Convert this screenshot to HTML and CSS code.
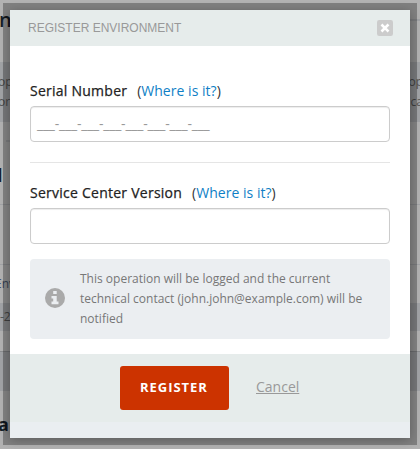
FILE: index.html
```html
<!DOCTYPE html>
<html lang="en">
<head>
<meta charset="utf-8">
<title>Register Environment</title>
<link rel="stylesheet" href="styles.css">
</head>
<body>
<div class="page">
  <div class="row title"><b>n</b><i></i></div>
  <div class="row band notice"><p><span>op</span><span>op</span></p><p><span>or</span><span>ca</span></p></div>
  <div class="row mark"><i></i></div>
  <div class="row heading"><b>l</b></div>
  <div class="row gap"></div>
  <div class="row env"><span>Env</span></div>
  <div class="row band version"><span>-2</span></div>
  <div class="row space"></div>
  <div class="row band strip"></div>
  <div class="row last"><b>a</b></div>
</div>
<div class="frame">
  <section class="modal">
    <header class="modal-header">
      <h1>REGISTER ENVIRONMENT</h1>
      <svg class="close" viewBox="0 0 16 16"><rect width="16" height="16" rx="2.2" fill="#ccc"/><path d="M5.4 5.4l5.2 5.2M10.6 5.4l-5.2 5.2" stroke="#fff" stroke-width="2.6" stroke-linecap="square"/></svg>
    </header>
    <div class="modal-body">
      <div class="field">
        <div class="label">Serial Number <span class="help">(<a>Where is it?</a>)</span></div>
        <div class="input">___-___-___-___-___-___-___-___</div>
      </div>
      <div class="field second">
        <div class="label">Service Center Version <span class="help">(<a>Where is it?</a>)</span></div>
        <div class="input"></div>
      </div>
      <div class="info">
        <svg class="info-icon" viewBox="0 0 20 20"><circle cx="10" cy="10" r="10" fill="#aaa"/><path d="M8.2 3h3.5v2.9H8.2zM6.5 7.9h5.2v5.7h1.8v2.6h-7v-2.6h1.7v-3.1H6.5z" fill="#ebeef1"/></svg>
        <p>This operation will be logged and the current<br>technical contact (john.john@example.com) will be<br>notified</p>
      </div>
    </div>
    <footer class="modal-footer">
      <div class="button">REGISTER</div>
      <a class="cancel">Cancel</a>
    </footer>
  </section>
</div>
</body>
</html>
```
FILE: styles.css
```css
* { box-sizing: border-box; }
body { margin: 0; width: 420px; height: 449px; overflow: hidden; position: relative; font-family: "Open Sans", sans-serif; background: #b2b2b2; }
p, h1 { margin: 0; }

.page { height: 449px; overflow: hidden; font-size: 12px; color: #555; white-space: nowrap; }
.row { overflow: hidden; }
.row b { color: #151d26; font-size: 18px; line-height: 24px; }
.band { background: #a1a3a6; }
.title { height: 62px; display: flex; justify-content: space-between; padding-top: 8px; }
.title b { font-size: 20px; font-weight: 600; margin-left: -1px; }
.title i { width: 11px; height: 2px; margin-top: 11px; background: #a1a3a6; }
.notice { height: 60px; padding-top: 10px; }
.notice p { display: flex; justify-content: space-between; height: 20px; line-height: 20px; margin: 0 -3px 0 -2px; }
.mark { height: 41px; padding: 18px 0 0 6px; }
.mark i { display: block; width: 5px; height: 2px; background: #a1a3a6; }
.heading { height: 42px; border-bottom: 1px solid #a1a3a6; }
.heading b { display: block; margin-left: -3px; }
.gap { height: 60px; border-bottom: 1px solid #a1a3a6; }
.env { height: 38px; line-height: 38px; color: #46536c; }
.env span { margin-left: -5px; }
.version { height: 28px; line-height: 28px; }
.space { height: 20px; }
.strip { height: 40px; border-top: 1px solid #8c8e90; }
.last { height: 58px; padding-top: 21px; }
.last b { display: block; margin-left: -2px; }

.frame { position: absolute; inset: 3px; width: 414px; height: 442px; padding: 7px; background: rgba(0, 0, 0, .28); }
.modal { width: 400px; height: 428px; background: #eaeef1; box-shadow: 0 2px 10px rgba(0, 0, 0, .28); }
.modal-header { height: 36px; padding: 0 17px 0 18px; display: flex; align-items: center; justify-content: space-between; background: #e6eceb; }
.modal-header h1 { font: 400 12px/36px "Liberation Sans", sans-serif; color: #999; }
.close { width: 16px; height: 16px; }
.modal-body { height: 308px; padding: 34px 20px 0; background: #fff; }
.label { height: 22px; line-height: 22px; font-size: 14px; letter-spacing: .25px; color: #222; -webkit-text-stroke: .25px #222; white-space: nowrap; }
.help { margin-left: 6px; letter-spacing: .03px; color: #333; -webkit-text-stroke: 0; }
.help a { color: #0f7fc6; }
.input { height: 36px; margin-top: 4px; padding: 0 6px; border: 1px solid #ccc; border-radius: 4px; box-shadow: inset 0 1px 1px rgba(0, 0, 0, .075); font-size: 14px; line-height: 34px; letter-spacing: -.2px; color: #999; }
.second { margin-top: 20px; padding-top: 19px; border-top: 1px solid #e5e5e5; }
.info { height: 80px; margin-top: 15px; padding: 10px 0 0 15px; display: flex; background: #ebeef1; border-radius: 4px; }
.info-icon { flex: none; width: 20px; height: 20px; margin: 19px 15px 0 0; }
.info p { font-size: 12px; line-height: 20px; color: #777; white-space: nowrap; }
.modal-footer { height: 68px; padding: 12px 0 0 110px; display: flex; align-items: flex-start; background: #e6eceb; }
.button { width: 109px; height: 44px; padding-left: 20px; border-radius: 3px; background: #cc3300; color: #fff; font-size: 13px; font-weight: 700; line-height: 43px; letter-spacing: .95px; }
.cancel { margin-left: 27px; font-size: 14px; line-height: 42px; color: #999; text-decoration: underline; }
```
